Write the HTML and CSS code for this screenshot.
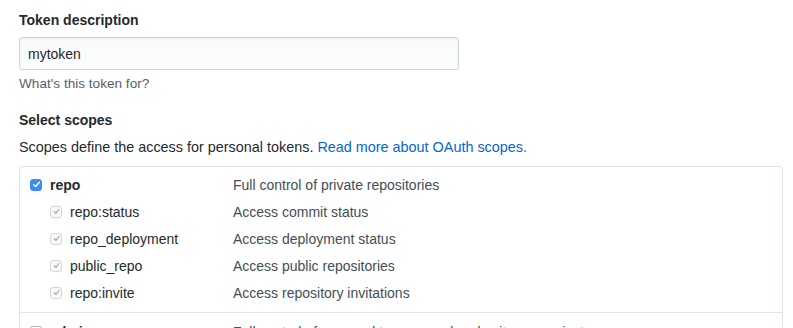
FILE: index.html
```html
<!DOCTYPE html>
<html>
<head>
<meta charset="utf-8">
<link rel="stylesheet" href="styles.css">
</head>
<body>
<div class="page">
  <dl class="field">
    <dt><label>Token description</label></dt>
    <dd><input class="input" type="text" value="mytoken"></dd>
    <p class="note">What's this token for?</p>
  </dl>
  <div class="field scopes-field">
    <h3 class="label">Select scopes</h3>
    <p class="lead">Scopes define the access for personal tokens. <a href="#">Read more about OAuth scopes.</a></p>
    <div class="box">
      <div class="group">
        <div class="row parent">
          <span class="name"><span class="cb checked"><svg viewBox="0 0 10 10" width="9" height="9"><path d="M2 5.2 L4.2 7.3 L8.2 2.6" fill="none" stroke="#fff" stroke-width="1.6" stroke-linecap="round" stroke-linejoin="round"/></svg></span><strong>repo</strong></span>
          <span class="desc">Full control of private repositories</span>
        </div>
        <div class="row child">
          <span class="name"><span class="cb disabled"><svg viewBox="0 0 10 10" width="9" height="9"><path d="M2.4 5.2 L4.3 7.1 L7.8 2.8" fill="none" stroke="#a3a3a3" stroke-width="1.2" stroke-linecap="round" stroke-linejoin="round"/></svg></span>repo:status</span>
          <span class="desc">Access commit status</span>
        </div>
        <div class="row child">
          <span class="name"><span class="cb disabled"><svg viewBox="0 0 10 10" width="9" height="9"><path d="M2.4 5.2 L4.3 7.1 L7.8 2.8" fill="none" stroke="#a3a3a3" stroke-width="1.2" stroke-linecap="round" stroke-linejoin="round"/></svg></span>repo_deployment</span>
          <span class="desc">Access deployment status</span>
        </div>
        <div class="row child">
          <span class="name"><span class="cb disabled"><svg viewBox="0 0 10 10" width="9" height="9"><path d="M2.4 5.2 L4.3 7.1 L7.8 2.8" fill="none" stroke="#a3a3a3" stroke-width="1.2" stroke-linecap="round" stroke-linejoin="round"/></svg></span>public_repo</span>
          <span class="desc">Access public repositories</span>
        </div>
        <div class="row child">
          <span class="name"><span class="cb disabled"><svg viewBox="0 0 10 10" width="9" height="9"><path d="M2.4 5.2 L4.3 7.1 L7.8 2.8" fill="none" stroke="#a3a3a3" stroke-width="1.2" stroke-linecap="round" stroke-linejoin="round"/></svg></span>repo:invite</span>
          <span class="desc">Access repository invitations</span>
        </div>
      </div>
      <div class="group">
        <div class="row parent">
          <span class="name"><span class="cb"></span><strong>admin:org</strong></span>
          <span class="desc">Full control of orgs and teams, read and write org projects</span>
        </div>
      </div>
    </div>
  </div>
</div>
</body>
</html>
```
FILE: styles.css
```css
* { box-sizing: border-box; }
html, body { margin: 0; padding: 0; background: #fff; }
body {
  font-family: "Liberation Sans", Arial, sans-serif;
  font-size: 14px;
  color: #24292e;
  overflow: hidden;
}
.page { padding: 11px 11px 0 19px; }
.field { margin: 0; }
dl.field dt { margin: 0; }
dl.field dd { margin: 0; }
dl.field dt label, .label {
  display: block;
  font-weight: bold;
  font-size: 14px;
  line-height: 18px;
  margin: 0 0 8px;
}
.input {
  width: 440px;
  height: 33px;
  padding: 6px 8px;
  font: inherit;
  font-size: 14px;
  color: #24292e;
  background: #fafbfc;
  border: 1px solid #d1d5da;
  border-radius: 3px;
  box-shadow: inset 0 1px 2px rgba(27,31,35,0.075);
  outline: none;
}
.note {
  margin: 5px 0 0;
  font-size: 13.6px;
  line-height: 18px;
  color: #586069;
}
.scopes-field { margin-top: 18px; }
.label { margin: 0 0 8px; }
.lead {
  margin: 0 0 9px;
  line-height: 20px;
  font-size: 14.4px;
}
.lead a { color: #0366d6; text-decoration: none; }
.box {
  border: 1px solid #e1e4e8;
  border-radius: 3px;
  width: 764px;
}
.group { padding: 4px 0 5px; border-bottom: 1px solid #e1e4e8; }
.group:last-child { border-bottom: 0; }
.group + .group { padding-top: 5px; }
.row {
  display: grid;
  grid-template-columns: 213px 1fr;
  height: 27px;
  align-items: center;
  line-height: 20px;
}
.group:first-child .row:last-child { margin-bottom: 1px; }
.name { display: flex; align-items: center; padding-left: 10px; }
.child .name { padding-left: 30px; }
.desc { color: #444d56; }
.cb {
  display: inline-flex;
  align-items: center;
  justify-content: center;
  width: 12px;
  height: 12px;
  border-radius: 3px;
  margin-right: 8px;
  border: 1px solid #b5b5b5;
  background: #fff;
  flex: none;
}
.cb.checked {
  background: #3c8cf7;
  border-color: #3c8cf7;
}
.cb.disabled {
  background: #f8f8f8;
  border-color: #d6d6d6;
}
```
